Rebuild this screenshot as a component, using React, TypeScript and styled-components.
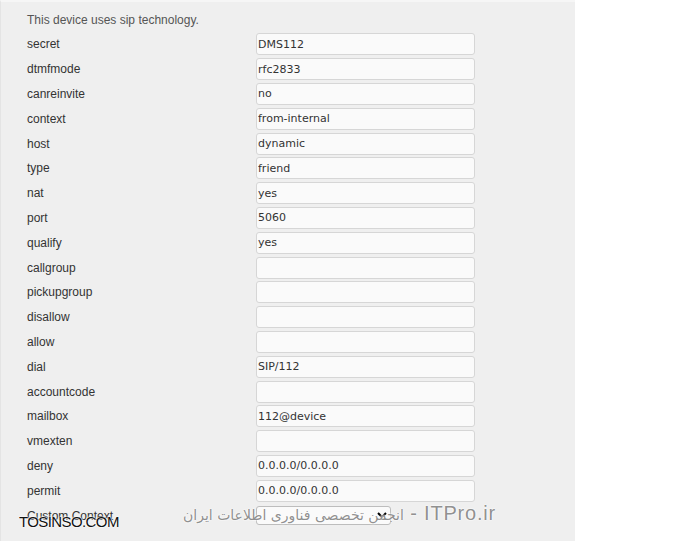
import React from "react";
import styled, { createGlobalStyle } from "styled-components";

const Global = createGlobalStyle`
  html, body { margin: 0; padding: 0; background: #ffffff; }
  body { font-family: "Liberation Sans", Arial, sans-serif; }
`;

const Page = styled.div`
  position: relative;
  width: 678px;
  height: 543px;
  overflow: hidden;
  background: #ffffff;
`;

const Panel = styled.div`
  width: 575px;
  height: 541px;
  background: #efefef;
  border-left: 1px solid #e4e4e4;
  border-top: 2px solid #f6f6f6;
  box-sizing: border-box;
  padding: 10px 0 0 26px;
`;

const Intro = styled.div`
  font-size: 12px;
  color: #555;
  height: 20px;
  line-height: 16px;
`;

const Form = styled.div`
  display: grid;
  grid-template-columns: 229px 219px;
  grid-auto-rows: 24.8px;
  align-items: center;
`;

const Label = styled.div`
  font-size: 12px;
  color: #333;
`;

const Field = styled.input`
  box-sizing: border-box;
  width: 219px;
  height: 22px;
  margin: 0;
  padding: 0 0 0 1px;
  border: 1px solid #d6d6d6;
  border-radius: 3px;
  background: #fafafa;
  font-family: "DejaVu Sans", Verdana, sans-serif;
  font-size: 11px;
  color: #333;
  outline: none;
`;

const Select = styled.select`
  box-sizing: border-box;
  width: 135px;
  height: 19px;
  margin: 0;
  border: 1px solid #bdbdbd;
  border-radius: 3px;
  background: #fafafa;
  font-size: 11px;
`;

const Watermark = styled.div`
  position: absolute;
  left: 184px;
  top: 502px;
  width: 312px;
  direction: rtl;
  text-align: left;
  color: rgba(115, 115, 115, 0.8);
  text-shadow: 0 0 2px #fff, 0 0 2px #fff;
  white-space: nowrap;
`;

const Latin = styled.span`
  font-family: "Liberation Sans", Arial, sans-serif;
  font-size: 20px;
  letter-spacing: 0.8px;
`;

const Persian = styled.span`
  font-family: "DejaVu Sans", sans-serif;
  font-size: 14px;
`;

const Brand = styled.div`
  position: absolute;
  left: 19px;
  top: 513px;
  font-family: "Liberation Sans", Arial, sans-serif;
  font-size: 15px;
  letter-spacing: -0.6px;
  color: #111;
  text-shadow: 0 0 2px #fff, 0 0 2px #fff, 0 0 1px #fff;
  white-space: nowrap;
`;

const rows: [string, string][] = [
  ["secret", "DMS112"],
  ["dtmfmode", "rfc2833"],
  ["canreinvite", "no"],
  ["context", "from-internal"],
  ["host", "dynamic"],
  ["type", "friend"],
  ["nat", "yes"],
  ["port", "5060"],
  ["qualify", "yes"],
  ["callgroup", ""],
  ["pickupgroup", ""],
  ["disallow", ""],
  ["allow", ""],
  ["dial", "SIP/112"],
  ["accountcode", ""],
  ["mailbox", "112@device"],
  ["vmexten", ""],
  ["deny", "0.0.0.0/0.0.0.0"],
  ["permit", "0.0.0.0/0.0.0.0"],
];

export default function App() {
  return (
    <Page>
      <Global />
      <Panel>
        <Intro>This device uses sip technology.</Intro>
        <Form>
          {rows.map(([k, v]) => (
            <React.Fragment key={k}>
              <Label>{k}</Label>
              <Field defaultValue={v} readOnly />
            </React.Fragment>
          ))}
          <Label>Custom Context</Label>
          <Select defaultValue="">
            <option value=""></option>
          </Select>
        </Form>
      </Panel>
      <Watermark>
        <Latin>ITPro.ir - </Latin>
        <Persian>انجمن تخصصی فناوری اطلاعات ایران</Persian>
      </Watermark>
      <Brand>TOSINSO.COM</Brand>
    </Page>
  );
}
